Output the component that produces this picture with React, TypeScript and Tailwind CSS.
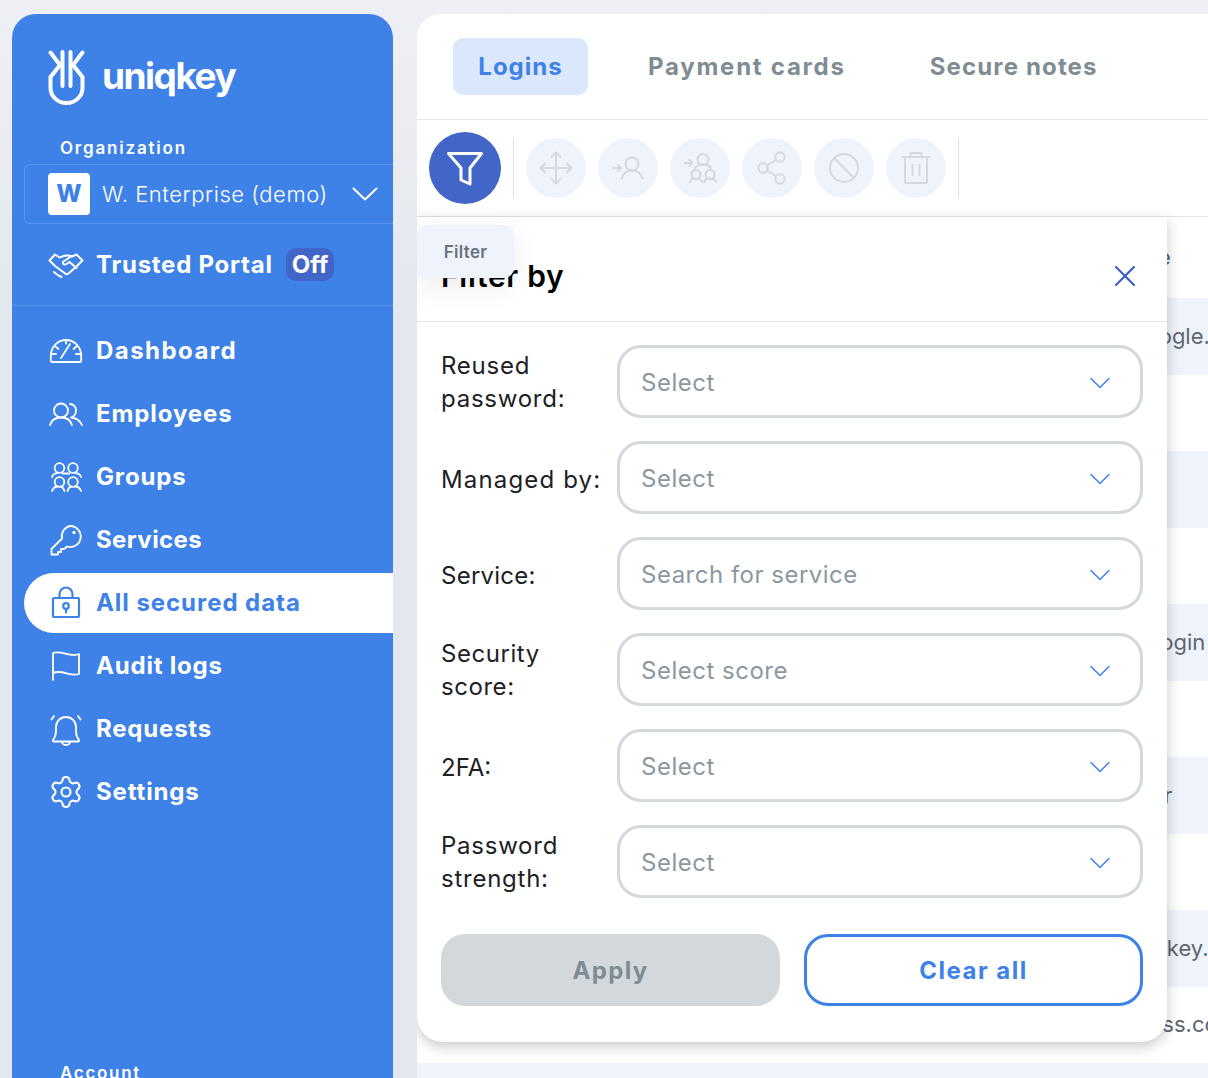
import React from 'react';
import { Settings } from 'lucide-react';

const Ico = ({ children, className = '', size = 34, sw = 2 }: { children: React.ReactNode; className?: string; size?: number; sw?: number }) => (
  <svg width={size} height={size} viewBox="0 0 34 34" fill="none" stroke="currentColor" strokeWidth={sw} strokeLinecap="round" strokeLinejoin="round" className={className}>
    {children}
  </svg>
);

const NAV = [
  {
    label: 'Dashboard',
    track: 'tracking-[1.45px]',
    icon: (
      <Ico sw={1.8}>
        <path d="M3 28c-.8 0-1.200-.5-1.200-1.200V22a15.200 16 0 0 1 30.400 0v4.800c0 .7-.4 1.200-1.200 1.200z" />
        <path d="M12 24l9-14M3 20h4M27 20h4M6.500 12.500l3 2.500M27.500 12.500l-3 2.500M17 6.500v3" />
      </Ico>
    ),
  },
  {
    label: 'Employees',
    track: 'tracking-[0.9px]',
    icon: (
      <Ico sw={1.8}>
        <circle cx="12" cy="13.500" r="7" />
        <path d="M1 28c1.500-5 5.500-7.500 11-7.500S21.500 23 23 28M21 7c3.500 0 6 3 6 6.500s-2 6-5 7c5 .5 9 3 11 7.500" />
      </Ico>
    ),
  },
  {
    label: 'Groups',
    track: 'tracking-[0.85px]',
    icon: (
      <Ico sw={1.8}>
        <circle cx="10.500" cy="8" r="4.800" />
        <circle cx="24" cy="8" r="4.800" />
        <circle cx="10.500" cy="22" r="4.800" />
        <circle cx="24" cy="22" r="4.800" />
        <path d="M3 17c1-2.500 3-3.800 5.500-3.800M32 17c-1-2.500-3-3.800-5.500-3.800M13.500 13.500h7M3 31c1-3 3-4.500 6-4.500M15.500 31c-1-3-2-4.500-4-4.500M32 31c-1-3-3-4.500-6-4.500M18.500 31c1-3 2-4.500 4-4.500" />
      </Ico>
    ),
  },
  {
    label: 'Services',
    track: 'tracking-[0.4px]',
    icon: (
      <Ico sw={1.8}>
        <path d="M21 3a10.500 10.500 0 1 1-3 20.500l-3 2.500h-3v3H9v2.500H2.500V26L13 15.500A10.500 10.500 0 0 1 21 3z" />
        <circle cx="25" cy="9.500" r=".8" fill="currentColor" />
      </Ico>
    ),
  },
  {
    label: 'All secured data',
    track: 'tracking-[0.95px]',
    icon: (
      <Ico sw={2.2}>
        <rect x="4" y="12" width="26" height="19" rx="1" />
        <path d="M10.500 12V8a6.500 6.500 0 0 1 13 0v4" />
        <circle cx="17" cy="20" r="2.800" />
        <path d="M17 23v3.500" />
      </Ico>
    ),
  },
  {
    label: 'Audit logs',
    track: 'tracking-[0.8px]',
    icon: (
      <Ico sw={1.8}>
        <path d="M4 31V4c9-3 17 5 26 1v20c-9 3-17-5-26-1" />
      </Ico>
    ),
  },
  {
    label: 'Requests',
    track: 'tracking-[0.8px]',
    icon: (
      <Ico sw={1.8}>
        <path d="M4 28c2-2.500 3-5 3-9v-4a10 10 0 0 1 20 0v4c0 4 1 6.500 3 9 .4.800 0 1.500-1 1.500H5c-1 0-1.400-.7-1-1.500z" />
        <path d="M13 30c.5 4 7.500 4 8 0M5 4L2.500 7.500M29 4l2.500 3.500" />
      </Ico>
    ),
  },
  {
    label: 'Settings',
    track: 'tracking-[0.85px]',
    icon: <Settings size={36} strokeWidth={1.4} className="-mx-px" />,
  },
];

const TOOLS = [
  <path key="m" d="M17 1.500v31M1.500 17h31M12.500 6L17 1.500 21.500 6M12.500 28l4.500 4.500 4.500-4.500M6 12.500L1.500 17 6 21.500M28 12.500l4.500 4.500-4.500 4.500" />,
  <g key="u">
    <circle cx="21" cy="13" r="6.500" />
    <path d="M11 27.500c1-5 5-8 10-8s9 3 10.500 8M2 17h8M7 14l3 3-3 3" />
  </g>,
  <g key="g">
    <circle cx="20" cy="8.500" r="5.500" />
    <circle cx="13" cy="23.500" r="4.500" />
    <circle cx="27" cy="23.500" r="4.500" />
    <path d="M12 17c1-2 4-3.500 8-3.500s7 1.500 8 3.500M7 31c.5-2 3-3.500 6-3.500s5.500 1.500 6 3.500M21 31c.5-2 3-3.500 6-3.500s5.500 1.500 6 3.500M1.500 12h8M6.500 9l3 3-3 3" />
  </g>,
  <g key="s">
    <circle cx="25" cy="6" r="4.700" />
    <circle cx="8" cy="17" r="4.700" />
    <circle cx="25" cy="28" r="4.700" />
    <path d="M12 14.500l9-5.500M12 19.500l9 5.500" />
  </g>,
  <g key="b">
    <circle cx="17" cy="17" r="14" />
    <path d="M7 7l20 20" />
  </g>,
  <g key="t">
    <path d="M3.500 6h27M11.500 6V2h11v4M6 6v26h22V6M13.500 14v10M20.500 14v10" />
  </g>,
];

const FILTERS = [
  { label: ['Reused', 'password:'], track: 'tracking-[0.75px]', value: 'Select' },
  { label: ['Managed by:'], track: 'tracking-[1.15px] pt-[4px]', value: 'Select' },
  { label: ['Service:'], track: 'tracking-[0.25px] pt-[4px]', value: 'Search for service' },
  { label: ['Security', 'score:'], track: 'tracking-[0.55px]', value: 'Select score' },
  { label: ['2FA:'], track: 'tracking-[0px] pt-[4px]', value: 'Select' },
  { label: ['Password', 'strength:'], track: 'tracking-[0.75px]', value: 'Select' },
];

const ROWS = [
  { text: 'google.', pad: 'pl-[715px]', tinted: true },
  { text: '', pad: '', tinted: false },
  { text: '', pad: '', tinted: true },
  { text: '', pad: '', tinted: false },
  { text: 'login', pad: 'pl-[738px]', tinted: true },
  { text: '', pad: '', tinted: false },
  { text: 'r', pad: 'pl-[747px]', tinted: true },
  { text: '', pad: '', tinted: false },
  { text: 'uniqkey.', pad: 'pl-[705px]', tinted: true },
  { text: 'access.com', pad: 'pl-[695px]', tinted: false },
  { text: '', pad: '', tinted: true },
];

const Chevron = () => (
  <svg width="20" height="12" viewBox="0 0 20 12" fill="none" stroke="#3d82e8" strokeWidth="1.500" strokeLinecap="round" strokeLinejoin="round">
    <path d="M1 1.500l9 9 9-9" />
  </svg>
);

export default function App() {
  return (
    <div className="h-[1078px] overflow-hidden flex items-start gap-[24px] pl-[12px] pt-[14px] bg-linear-to-b from-[#eef0f5] to-[#e4e7ee] to-[30%] font-['Inter',sans-serif]">
      {/* Sidebar */}
      <aside className="w-[381px] h-[1100px] shrink-0 bg-[#3e82e8] rounded-t-[24px] text-white flex flex-col">
        <div className="flex items-center gap-[17px] pl-[36px] pt-[36px]">
          <svg width="37" height="55" viewBox="0 0 37 55" fill="none" stroke="white" strokeWidth="4" strokeLinecap="round" strokeLinejoin="round">
            <path d="M2.500 2.500L12 15 2.500 27v11a16 15 0 0 0 32 0V27L25 15l9.500-12.500" />
            <path d="M14.500 2v34M22.500 2v34" />
          </svg>
          <span className="text-[37px] leading-[44px] font-bold tracking-[-1.5px] -mt-[4px]">uniqkey</span>
        </div>
        <div className="pl-[48px] mt-[31px] text-[17px] leading-[24px] font-semibold tracking-[1.8px]">Organization</div>
        <div className="ml-[12px] mt-[4px] h-[60px] flex items-center pl-[23px] pr-[15px] border border-r-0 border-[#5a95ec] rounded-l-[6px]">
          <div className="w-[42px] h-[42px] rounded-[4px] bg-white text-[#3e82e8] flex items-center justify-center text-[24px] font-extrabold">W</div>
          <span className="ml-[12px] text-[22px] font-light tracking-[0.55px] whitespace-nowrap">W. Enterprise (demo)</span>
          <svg className="ml-auto" width="26" height="14" viewBox="0 0 26 14" fill="none" stroke="white" strokeWidth="2" strokeLinecap="round" strokeLinejoin="round">
            <path d="M1.500 1.500L13 12.500 24.500 1.500" />
          </svg>
        </div>
        <div className="h-[82px] flex items-center pl-[36px] border-b border-[#5a95ec]">
          <svg width="36" height="28" viewBox="0 0 36 28" fill="none" stroke="white" strokeWidth="2" strokeLinecap="round" strokeLinejoin="round">
            <path d="M1.500 9.500L7 3.500l4.500 3c3.500-1.500 8-3 12.500-1l4.500-2 6 6-5.500 5.500-8.500 7.500c-1.500 1-3 .5-4-.5L7 15z" />
            <path d="M23 5.500l-7.500 5c-2 2 1 4 3 2.500l3-2 7 6" />
            <path d="M6 21l3 2.500M10.500 24.500l3 1.500" />
          </svg>
          <span className="ml-[12px] text-[24px] font-bold tracking-[0.75px] whitespace-nowrap">Trusted Portal</span>
          <span className="ml-[13px] h-[33px] px-[6px] rounded-[10px] bg-[#4166c7] text-[24px] leading-[33px] font-bold">Off</span>
        </div>
        <nav className="mt-[15px] flex flex-col gap-[3px]">
          {NAV.map((item) =>
            item.label === 'All secured data' ? (
              <div key={item.label} className="ml-[12px] h-[60px] flex items-center pl-[25px] rounded-l-[30px] bg-white text-[#3e82e8]">
                {item.icon}
                <span className={`ml-[13px] text-[24px] font-bold ${item.track}`}>{item.label}</span>
              </div>
            ) : (
              <div key={item.label} className="ml-[12px] h-[60px] flex items-center pl-[25px]">
                {item.icon}
                <span className={`ml-[13px] text-[24px] font-bold ${item.track}`}>{item.label}</span>
              </div>
            ),
          )}
        </nav>
        <div className="pl-[48px] mt-[239px] text-[17px] leading-[24px] font-semibold tracking-[1.7px]">Account</div>
      </aside>

      {/* Main */}
      <main className="relative flex-1 min-w-0 h-[1100px] bg-white rounded-tl-[24px] overflow-hidden">
        <div className="h-[106px] flex items-center pl-[36px] pb-[1px] border-b border-[#e3e5e8] text-[24px] font-bold text-[#7f8c94]">
          <div className="w-[135px] h-[57px] pt-[2px] rounded-[10px] bg-[#dbe7fb] text-[#3e82e8] flex items-center justify-center tracking-[1px]">Logins</div>
          <div className="ml-[60px] pt-[2px] tracking-[1.75px] whitespace-nowrap">Payment cards</div>
          <div className="ml-[84px] pt-[2px] tracking-[1.15px] whitespace-nowrap">Secure notes</div>
        </div>
        <div className="h-[97px] flex items-center pl-[12px] border-b border-[#e3e5e8]">
          <div className="w-[72px] h-[72px] rounded-full bg-[#4166c7] text-white flex items-center justify-center">
            <svg width="36" height="36" viewBox="0 0 36 36" fill="none" stroke="white" strokeWidth="3" strokeLinecap="round" strokeLinejoin="round">
              <path d="M1.500 3.500h33L23 18v16l-9-4V18z" />
            </svg>
          </div>
          <div className="ml-[12px] w-px h-[60px] bg-[#e0e3e6]" />
          <div className="ml-[12px] flex gap-[12px] text-[#d5d9de]">
            {TOOLS.map((icon, i) => (
              <div key={i} className="w-[60px] h-[60px] rounded-full bg-[#eff3fb] flex items-center justify-center">
                <Ico size={34} sw={2}>{icon}</Ico>
              </div>
            ))}
          </div>
          <div className="ml-[12px] w-px h-[60px] bg-[#e0e3e6]" />
        </div>
        {/* Table behind the panel */}
        <div className="h-[81px] flex items-center pl-[741px] text-[22px] text-[#5f6670]">e</div>
        <div className="text-[22px] text-[#5f6670]">
          {ROWS.map((row, i) => (
            <div key={i} className={`h-[76.500px] flex items-center whitespace-nowrap ${row.pad} ${row.tinted ? 'bg-[#eff3fb]' : 'bg-white'}`}>
              {row.text}
            </div>
          ))}
        </div>

        {/* Filter panel */}
        <div className="absolute left-0 top-[203px] w-[750px] h-[825px] bg-white rounded-b-[26px] shadow-[0_4px_14px_rgba(0,0,0,0.22)]">
          <div className="h-[105px] flex items-center justify-between pl-[24px] pr-[31px] pt-[14px] border-b border-[#e3e5e8]">
            <span className="text-[30px] font-semibold text-black tracking-[0.7px]">Filter by</span>
            <svg width="22" height="22" viewBox="0 0 22 22" fill="none" stroke="#3a62c4" strokeWidth="2.200" strokeLinecap="round">
              <path d="M2 2l18 18M20 2L2 20" />
            </svg>
          </div>
          <div className="pt-[23px] px-[24px] flex flex-col gap-[23px]">
            {FILTERS.map((f) => (
              <div key={f.label.join(' ')} className="flex items-center">
                <div className={`w-[176px] shrink-0 text-[24px] leading-[33px] text-[#1d2125] ${f.track}`}>
                  {f.label.map((line) => (
                    <div key={line} className="whitespace-nowrap">{line}</div>
                  ))}
                </div>
                <div className="flex-1 h-[73px] flex items-center justify-between pl-[21px] pr-[30px] border-[3px] border-[#d3d8dc] rounded-[24px] text-[24px] text-[#8c98a0] tracking-[0.5px]">
                  <span className="pt-[2px]">{f.value}</span>
                  <span className="pt-[2px]">
                    <Chevron />
                  </span>
                </div>
              </div>
            ))}
          </div>
          <div className="mt-[36px] px-[24px] grid grid-cols-2 gap-[24px] text-[24px] font-bold">
            <div className="h-[72px] pt-[2px] rounded-[24px] bg-[#d3d8dc] text-[#7f8c94] flex items-center justify-center tracking-[1.300px]">Apply</div>
            <div className="h-[72px] pt-[2px] rounded-[24px] border-[3px] border-[#3e82e8] text-[#3e82e8] flex items-center justify-center tracking-[1.500px]">Clear all</div>
          </div>
        </div>

        {/* Tooltip */}
        <div className="absolute left-0 top-[211px] w-[97px] h-[53px] pt-[2px] rounded-[10px] bg-[#eff3fb] flex items-center justify-center text-[17px] font-semibold tracking-[0.3px] text-[#6b7280] shadow-[0_8px_30px_rgba(0,0,0,0.08)]">
          Filter
        </div>
      </main>
    </div>
  );
}
